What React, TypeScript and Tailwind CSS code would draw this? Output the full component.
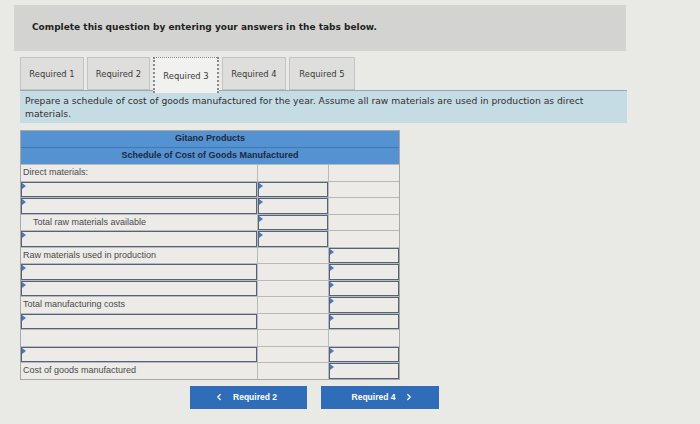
import React from "react";
import { ChevronLeft, ChevronRight } from "lucide-react";

type Cell = "s" | "i";
type Row = { label: string; indent?: boolean; c: [Cell, Cell, Cell] };

const rows: Row[] = [
  { label: "Direct materials:", c: ["s", "s", "s"] },
  { label: "", c: ["i", "i", "s"] },
  { label: "", c: ["i", "i", "s"] },
  { label: "Total raw materials available", indent: true, c: ["s", "i", "s"] },
  { label: "", c: ["i", "i", "s"] },
  { label: "Raw materials used in production", c: ["s", "s", "i"] },
  { label: "", c: ["i", "s", "i"] },
  { label: "", c: ["i", "s", "i"] },
  { label: "Total manufacturing costs", c: ["s", "s", "i"] },
  { label: "", c: ["i", "s", "i"] },
  { label: "", c: ["s", "s", "s"] },
  { label: "", c: ["i", "s", "i"] },
  { label: "Cost of goods manufactured", c: ["s", "s", "i"] },
];

function InputBox() {
  return (
    <div className="relative h-full w-full border-[1.5px] border-[#56617a] bg-[#ecebe8]">
      <div className="absolute left-0 top-0 h-0 w-0 border-l-[4px] border-t-[3px] border-b-[3px] border-l-[#4a78c0] border-t-transparent border-b-transparent" />
    </div>
  );
}

function Tab({ label, active, w }: { label: string; active?: boolean; w: string }) {
  return (
    <div
      className={
        active
          ? `${w} relative z-10 flex h-[36px] items-center justify-center border-x-2 border-t border-dotted border-[#8a8a8a] bg-[#f1f1ef] pt-[1px] text-[8.4px] text-[#3a3a3a]`
          : `${w} flex h-[33px] items-center justify-center border border-[#c4c4c2] bg-[#dededc] pt-[2px] text-[8.4px] text-[#3a3a3a]`
      }
      style={{ fontFamily: '"DejaVu Sans", Verdana, sans-serif' }}
    >
      {label}
    </div>
  );
}

export default function App() {
  return (
    <div
      className="h-[424px] w-[700px] overflow-hidden bg-[#e9e9e6] pt-[5px]"
      style={{ fontFamily: '"Liberation Sans", Arial, sans-serif' }}
    >
      <div
        className="ml-[14px] flex h-[46px] w-[612px] items-center bg-[#d3d3d1] pl-[18px] text-[9px] font-bold text-[#1f1f1f]"
        style={{ fontFamily: '"DejaVu Sans", Verdana, sans-serif' }}
      >
        Complete this question by entering your answers in the tabs below.
      </div>

      <div className="ml-[20px] mt-[6px] flex items-start gap-[3px]">
        <Tab label="Required 1" w="w-[64px]" />
        <Tab label="Required 2" w="w-[63px]" />
        <Tab label="Required 3" w="w-[66px]" active />
        <Tab label="Required 4" w="w-[64px]" />
        <Tab label="Required 5" w="w-[66px]" />
      </div>

      <div
        className="ml-[20px] mt-[-3px] h-[33px] w-[607px] border-t border-[#9aa7ae] bg-[#c6dce5] pl-[5px] pr-[20px] pt-[3px] text-[9.2px] leading-[13px] text-[#2f2f2f]"
        style={{ fontFamily: '"DejaVu Sans", Verdana, sans-serif' }}
      >
        Prepare a schedule of cost of goods manufactured for the year. Assume all raw materials are used in production as direct materials.
      </div>

      <div className="ml-[20px] mt-[7px] w-[380px] border border-[#a8a8a8] bg-[#ecebe8]">
        <div className="flex h-[17px] items-center justify-center border-b border-[#3f78b8] bg-[#5592d2] text-[9px] font-bold text-[#1c2940]">
          Gitano Products
        </div>
        <div className="flex h-[16px] items-center justify-center bg-[#5592d2] text-[9px] font-bold text-[#1c2940]">
          Schedule of Cost of Goods Manufactured
        </div>
        {rows.map((r, i) => (
          <div key={i} className="grid h-[16.5px] grid-cols-[237px_71px_70px] border-t border-[#b9b9b7]">
            {r.c.map((c, j) => (
              <div
                key={j}
                className={
                  j < 2
                    ? "flex h-full items-center border-r border-[#b9b9b7]"
                    : "flex h-full items-center"
                }
              >
                {c === "i" ? (
                  <InputBox />
                ) : j === 0 && r.label ? (
                  <span
                    className={
                      r.indent
                        ? "pl-[12px] text-[9px] text-[#4a4a4a]"
                        : "pl-[2px] text-[9px] text-[#4a4a4a]"
                    }
                  >
                    {r.label}
                  </span>
                ) : null}
              </div>
            ))}
          </div>
        ))}
      </div>

      <div className="mt-[6px] flex gap-[14px] pl-[190px]">
        <div className="flex h-[23px] w-[117px] items-center justify-center gap-[9px] bg-[#2f6db8] pr-[6px] text-[8.5px] font-bold text-white">
          <ChevronLeft size={10} strokeWidth={3} />
          <span>Required 2</span>
        </div>
        <div className="flex h-[23px] w-[118px] items-center justify-center gap-[9px] bg-[#2f6db8] pl-[6px] text-[8.5px] font-bold text-white">
          <span>Required 4</span>
          <ChevronRight size={10} strokeWidth={3} />
        </div>
      </div>
    </div>
  );
}
